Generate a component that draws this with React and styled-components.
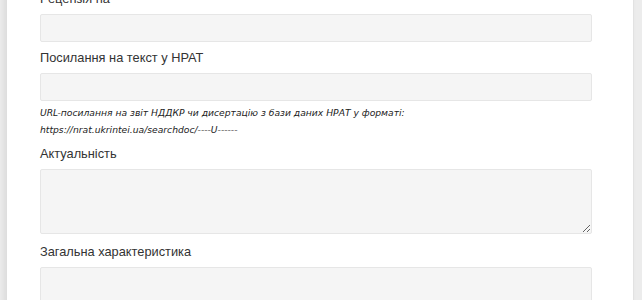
import styled, { createGlobalStyle } from 'styled-components';

const GlobalStyle = createGlobalStyle`
  html, body {
    margin: 0;
    padding: 0;
    background: #ececec;
    overflow: hidden;
  }
`;

const Page = styled.div`
  width: 642px;
  height: 300px;
  overflow: hidden;
  padding-left: 7px;
  box-sizing: border-box;
`;

const Card = styled.div`
  width: 627px;
  margin-top: -10px;
  background: #fff;
  box-shadow: -3px 0 6px rgba(0, 0, 0, 0.08);
  border-right: 1px solid #e2e2e2;
  padding: 0 0 20px 33px;
  box-sizing: border-box;
  font-family: 'Liberation Sans', Arial, sans-serif;
  color: #333;
`;

const Field = styled.div`
  margin-bottom: ${(p) => (p.$tall ? '9px' : '7px')};
`;

const Label = styled.label`
  display: block;
  font-size: 12.8px;
  line-height: 18px;
  margin-bottom: 6px;
`;

const Input = styled.input`
  display: block;
  width: 552px;
  height: 28px;
  box-sizing: border-box;
  background: #f5f5f5;
  border: 1px solid #e6e6e6;
  border-radius: 2px;
  outline: none;
`;

const TextArea = styled.textarea`
  display: block;
  width: 552px;
  height: 65px;
  box-sizing: border-box;
  background: #f5f5f5;
  border: 1px solid #e6e6e6;
  border-radius: 2px;
  outline: none;
`;

const Help = styled.p`
  margin: 3px 0 0;
  font-family: 'DejaVu Sans', Verdana, sans-serif;
  font-size: 9.2px;
  line-height: 17px;
  font-style: italic;
  color: #222;
`;

const App = () => (
  <>
    <GlobalStyle />
    <Page>
      <Card>
        <Field>
          <Label>Рецензія на</Label>
          <Input />
        </Field>
        <Field>
          <Label>Посилання на текст у НРАТ</Label>
          <Input />
          <Help>
            URL-посилання на звіт НДДКР чи дисертацію з бази даних НРАТ у форматі:
            <br />
            https://nrat.ukrintei.ua/searchdoc/----U------
          </Help>
        </Field>
        <Field $tall>
          <Label>Актуальність</Label>
          <TextArea />
        </Field>
        <Field $tall>
          <Label>Загальна характеристика</Label>
          <TextArea />
        </Field>
      </Card>
    </Page>
  </>
);

export default App;
